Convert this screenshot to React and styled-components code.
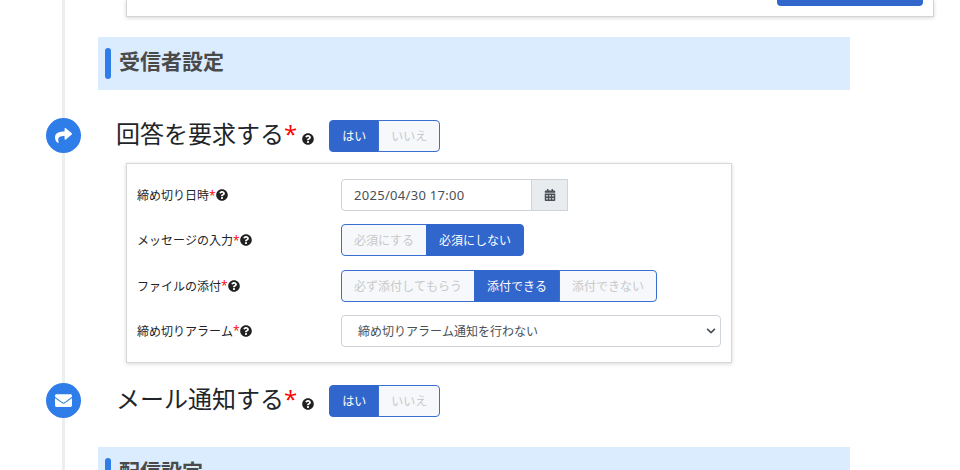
import React from "react";
import styled, { createGlobalStyle } from "styled-components";
import { FaShare, FaEnvelope, FaCalendarAlt, FaQuestionCircle, FaChevronDown } from "react-icons/fa";

const GlobalStyle = createGlobalStyle`
  html, body {
    margin: 0;
    padding: 0;
    background: #fff;
    overflow: hidden;
  }
  body {
    font-family: "Open Sans", "Noto Sans CJK JP", sans-serif;
    font-kerning: none;
    color: #212529;
  }
`;

function Toggle({ options, active }) {
  return (
    <ToggleGroup>
      {options.map((o) => (
        <ToggleButton key={o} $active={o === active}>
          {o}
        </ToggleButton>
      ))}
    </ToggleGroup>
  );
}

function SettingRow({ label, children }) {
  return (
    <Row>
      <RowLabel>
        {label}
        <Required>*</Required>
        <SmallHelp />
      </RowLabel>
      {children}
    </Row>
  );
}

export default function App() {
  return (
    <Page>
      <GlobalStyle />
      <TimelineLine />
      <TopCard>
        <SaveButton />
      </TopCard>
      <SectionHeader>
        <SectionBar />
        <SectionTitle>受信者設定</SectionTitle>
      </SectionHeader>

      <StepRow>
        <StepIcon>
          <FaShare size={17} />
        </StepIcon>
        <StepTitle>回答を要求する</StepTitle>
        <StepStar>*</StepStar>
        <StepHelp />
        <Toggle options={["はい", "いいえ"]} active="はい" />
      </StepRow>

      <SettingsCard>
        <SettingRow label="締め切り日時">
          <DateGroup>
            <DateInput>2025/04/30 17:00</DateInput>
            <DateAddon>
              <FaCalendarAlt size={12} />
            </DateAddon>
          </DateGroup>
        </SettingRow>
        <SettingRow label="メッセージの入力">
          <Toggle options={["必須にする", "必須にしない"]} active="必須にしない" />
        </SettingRow>
        <SettingRow label="ファイルの添付">
          <Toggle
            options={["必ず添付してもらう", "添付できる", "添付できない"]}
            active="添付できる"
          />
        </SettingRow>
        <SettingRow label="締め切りアラーム">
          <SelectBox>
            締め切りアラーム通知を行わない
            <FaChevronDown size={10} />
          </SelectBox>
        </SettingRow>
      </SettingsCard>

      <MailRow>
        <StepIcon>
          <FaEnvelope size={17} />
        </StepIcon>
        <StepTitle>メール通知する</StepTitle>
        <StepStar>*</StepStar>
        <StepHelp />
        <Toggle options={["はい", "いいえ"]} active="はい" />
      </MailRow>

      <NextSection>
        <SectionBar />
        <SectionTitle>配信設定</SectionTitle>
      </NextSection>
    </Page>
  );
}

const Page = styled.div`
  position: relative;
  width: 960px;
  height: 470px;
  overflow: hidden;
  background: #fff;
`;

const TimelineLine = styled.div`
  position: absolute;
  left: 62px;
  top: 0;
  bottom: 0;
  width: 3px;
  background: #eeeeee;
`;

const TopCard = styled.div`
  width: 808px;
  height: 17px;
  margin-left: 126px;
  background: #fff;
  border-right: 1px solid #d4d4d4;
  border-bottom: 1px solid #d4d4d4;
  border-left: 1px solid #d4d4d4;
  box-sizing: border-box;
  box-shadow: 0 1px 4px rgba(0, 0, 0, 0.16);
  display: flex;
  justify-content: flex-end;
  padding-right: 10px;
`;

const SaveButton = styled.div`
  width: 146px;
  height: 6px;
  background: #3166cc;
  border-radius: 0 0 4px 4px;
`;

const SectionHeader = styled.div`
  display: flex;
  align-items: center;
  gap: 8px;
  width: 745px;
  height: 53px;
  margin: 20px 0 0 98px;
  padding-left: 7px;
  background: #dbecfe;
`;

const NextSection = styled(SectionHeader)`
  margin-top: 29px;
`;

const SectionBar = styled.div`
  width: 6px;
  height: 31px;
  border-radius: 3px;
  background: #2f7de8;
`;

const SectionTitle = styled.h2`
  margin: 0 0 4px;
  font-size: 21px;
  font-weight: 700;
  line-height: 1.2;
  color: #4a4a4a;
`;

const StepRow = styled.div`
  position: relative;
  display: flex;
  align-items: center;
  height: 35px;
  margin: 28px 0 0 46px;
`;

const MailRow = styled(StepRow)`
  margin-top: 20px;
`;

const StepIcon = styled.div`
  display: flex;
  align-items: center;
  justify-content: center;
  width: 35px;
  height: 35px;
  margin-right: 35px;
  border-radius: 50%;
  background: #2f7de8;
  color: #fff;
`;

const StepTitle = styled.span`
  padding-bottom: 4px;
  font-size: 24px;
  line-height: 30px;
  color: #212529;
`;

const StepStar = styled.span`
  padding-bottom: 4px;
  font-size: 24px;
  line-height: 30px;
  color: #ff0000;
`;

const StepHelp = styled(FaQuestionCircle)`
  width: 12px;
  height: 12px;
  margin: 6px 15px 0 5px;
  color: #212121;
`;

const ToggleGroup = styled.div`
  display: inline-flex;
  height: 32px;
`;

const ToggleButton = styled.div`
  display: flex;
  align-items: center;
  padding: 0 12px;
  font-size: 12px;
  border: 1px solid #3a6fd2;
  background: ${(p) => (p.$active ? "#3166cc" : "#f6f8fb")};
  border-color: ${(p) => (p.$active ? "#3166cc" : "#3a6fd2")};
  color: ${(p) => (p.$active ? "#fff" : "#c8c8c8")};

  & + & {
    margin-left: -1px;
  }
  &:first-child {
    border-radius: 4px 0 0 4px;
  }
  &:last-child {
    border-radius: 0 4px 4px 0;
  }
`;

const SettingsCard = styled.div`
  display: flex;
  flex-direction: column;
  gap: 13.33px;
  box-sizing: border-box;
  width: 606px;
  height: 200px;
  margin: 10px 0 0 126px;
  padding: 15px 10px 0;
  border: 1px solid #d8d8d8;
  box-shadow: 0 1px 4px rgba(0, 0, 0, 0.16);
`;

const Row = styled.div`
  display: flex;
  align-items: center;
  height: 32px;
`;

const RowLabel = styled.div`
  display: flex;
  align-items: center;
  width: 204px;
  font-size: 12px;
  color: #212529;
`;

const Required = styled.span`
  color: #ff0000;
`;

const SmallHelp = styled(FaQuestionCircle)`
  width: 12px;
  height: 12px;
  color: #212121;
`;

const DateGroup = styled.div`
  display: flex;
  height: 32px;
`;

const DateInput = styled.div`
  display: flex;
  align-items: center;
  box-sizing: border-box;
  width: 191px;
  padding-left: 12px;
  font-family: "Noto Sans", sans-serif;
  font-size: 13px;
  letter-spacing: 0.3px;
  color: #495057;
  border: 1px solid #ced4da;
  border-radius: 4px 0 0 4px;
`;

const DateAddon = styled.div`
  display: flex;
  align-items: center;
  justify-content: center;
  box-sizing: border-box;
  width: 37px;
  margin-left: -1px;
  color: #495057;
  background: #e9ecef;
  border: 1px solid #ced4da;
`;

const SelectBox = styled.div`
  display: flex;
  align-items: center;
  justify-content: space-between;
  box-sizing: border-box;
  width: 380px;
  height: 32px;
  padding: 0 4px 0 16px;
  font-size: 12px;
  color: #495057;
  border: 1px solid #ced4da;
  border-radius: 4px;
`;
